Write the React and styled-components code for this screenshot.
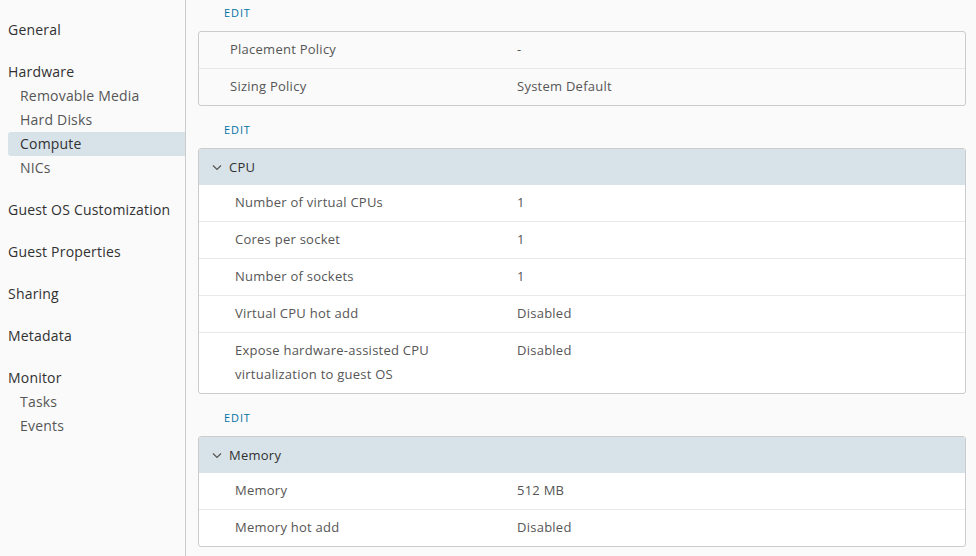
import React from 'react'
import styled, { createGlobalStyle } from 'styled-components'

const GlobalStyle = createGlobalStyle`
  html, body {
    margin: 0;
    padding: 0;
    background: #fafafa;
    font-family: 'Open Sans', 'Liberation Sans', sans-serif;
  }
`

const Page = styled.div`
  display: flex;
  width: 976px;
  height: 556px;
  overflow: hidden;
  background: #fafafa;
`

const Sidebar = styled.nav`
  width: 185px;
  flex-shrink: 0;
  border-right: 1px solid #cccccc;
  padding-top: 18px;
  box-sizing: content-box;
`

const NavGroup = styled.div`
  margin-bottom: 18px;
`

const NavHeader = styled.div`
  padding-left: 8px;
  height: 24px;
  line-height: 24px;
  font-size: 14px;
  letter-spacing: 0.2px;
  color: #313131;
`

const NavItem = styled.div`
  margin-left: 8px;
  padding-left: 12px;
  height: 24px;
  line-height: 24px;
  font-size: 14px;
  letter-spacing: 0.2px;
  color: ${(p) => (p.$active ? '#313131' : '#565656')};
  background: ${(p) => (p.$active ? '#d8e3e9' : 'transparent')};
  border-radius: ${(p) => (p.$active ? '3px 0 0 3px' : '0')};
`

const Content = styled.main`
  flex: 1;
  padding: 0 10px 0 12px;
`

const EditButton = styled.button`
  display: block;
  background: none;
  border: none;
  padding: 0 0 0 26px;
  height: 26px;
  line-height: 26px;
  margin-top: ${(p) => (p.$first ? '0' : '11px')};
  margin-bottom: 5px;
  font-family: inherit;
  font-size: 11px;
  letter-spacing: 0.9px;
  color: #0072a3;
  cursor: pointer;
`

const Card = styled.div`
  border: 1px solid #cccccc;
  border-radius: 3px;
  overflow: hidden;
  background: ${(p) => (p.$plain ? '#fafafa' : '#ffffff')};
`

const CardHeader = styled.div`
  display: flex;
  align-items: center;
  height: 35px;
  padding: 0 0 1px 12px;
  background: #d8e3e9;
  font-size: 13px;
  letter-spacing: 0.25px;
  color: #313131;
  gap: 6px;
`

const Row = styled.div`
  display: flex;
  padding: 5px 0 7px;
  border-top: ${(p) => (p.$first ? 'none' : '1px solid #e8e8e8')};
  font-size: 13px;
  letter-spacing: 0.25px;
  line-height: 24px;
  color: #565656;
`

const Label = styled.div`
  width: ${(p) => (p.$indent ? '282px' : '287px')};
  padding-left: ${(p) => (p.$indent ? '36px' : '31px')};
  flex-shrink: 0;
`

const Value = styled.div`
  flex: 1;
`

const Chevron = () => (
  <svg width="12" height="12" viewBox="0 0 12 12">
    <path d="M2 4.5 L6 8.5 L10 4.5" fill="none" stroke="#565656" strokeWidth="1.2" />
  </svg>
)

const nav = [
  { title: 'General' },
  { title: 'Hardware', items: ['Removable Media', 'Hard Disks', 'Compute', 'NICs'] },
  { title: 'Guest OS Customization' },
  { title: 'Guest Properties' },
  { title: 'Sharing' },
  { title: 'Metadata' },
  { title: 'Monitor', items: ['Tasks', 'Events'] },
]

const cpuRows = [
  ['Number of virtual CPUs', '1'],
  ['Cores per socket', '1'],
  ['Number of sockets', '1'],
  ['Virtual CPU hot add', 'Disabled'],
  [<>Expose hardware-assisted CPU<br />virtualization to guest OS</>, 'Disabled'],
]

const memoryRows = [
  ['Memory', '512 MB'],
  ['Memory hot add', 'Disabled'],
]

const Section = ({ title, rows }) => (
  <Card>
    <CardHeader>
      <Chevron />
      {title}
    </CardHeader>
    {rows.map(([k, v], i) => (
      <Row key={i} $first={i === 0}>
        <Label $indent>{k}</Label>
        <Value>{v}</Value>
      </Row>
    ))}
  </Card>
)

const App = () => {
  return (
    <>
      <GlobalStyle />
      <Page>
        <Sidebar>
          {nav.map((g) => (
            <NavGroup key={g.title}>
              <NavHeader>{g.title}</NavHeader>
              {g.items &&
                g.items.map((it) => (
                  <NavItem key={it} $active={it === 'Compute'}>
                    {it}
                  </NavItem>
                ))}
            </NavGroup>
          ))}
        </Sidebar>
        <Content>
          <EditButton $first>EDIT</EditButton>
          <Card $plain>
            <Row $first>
              <Label>Placement Policy</Label>
              <Value>-</Value>
            </Row>
            <Row>
              <Label>Sizing Policy</Label>
              <Value>System Default</Value>
            </Row>
          </Card>
          <EditButton>EDIT</EditButton>
          <Section title="CPU" rows={cpuRows} />
          <EditButton>EDIT</EditButton>
          <Section title="Memory" rows={memoryRows} />
        </Content>
      </Page>
    </>
  )
}

export default App
